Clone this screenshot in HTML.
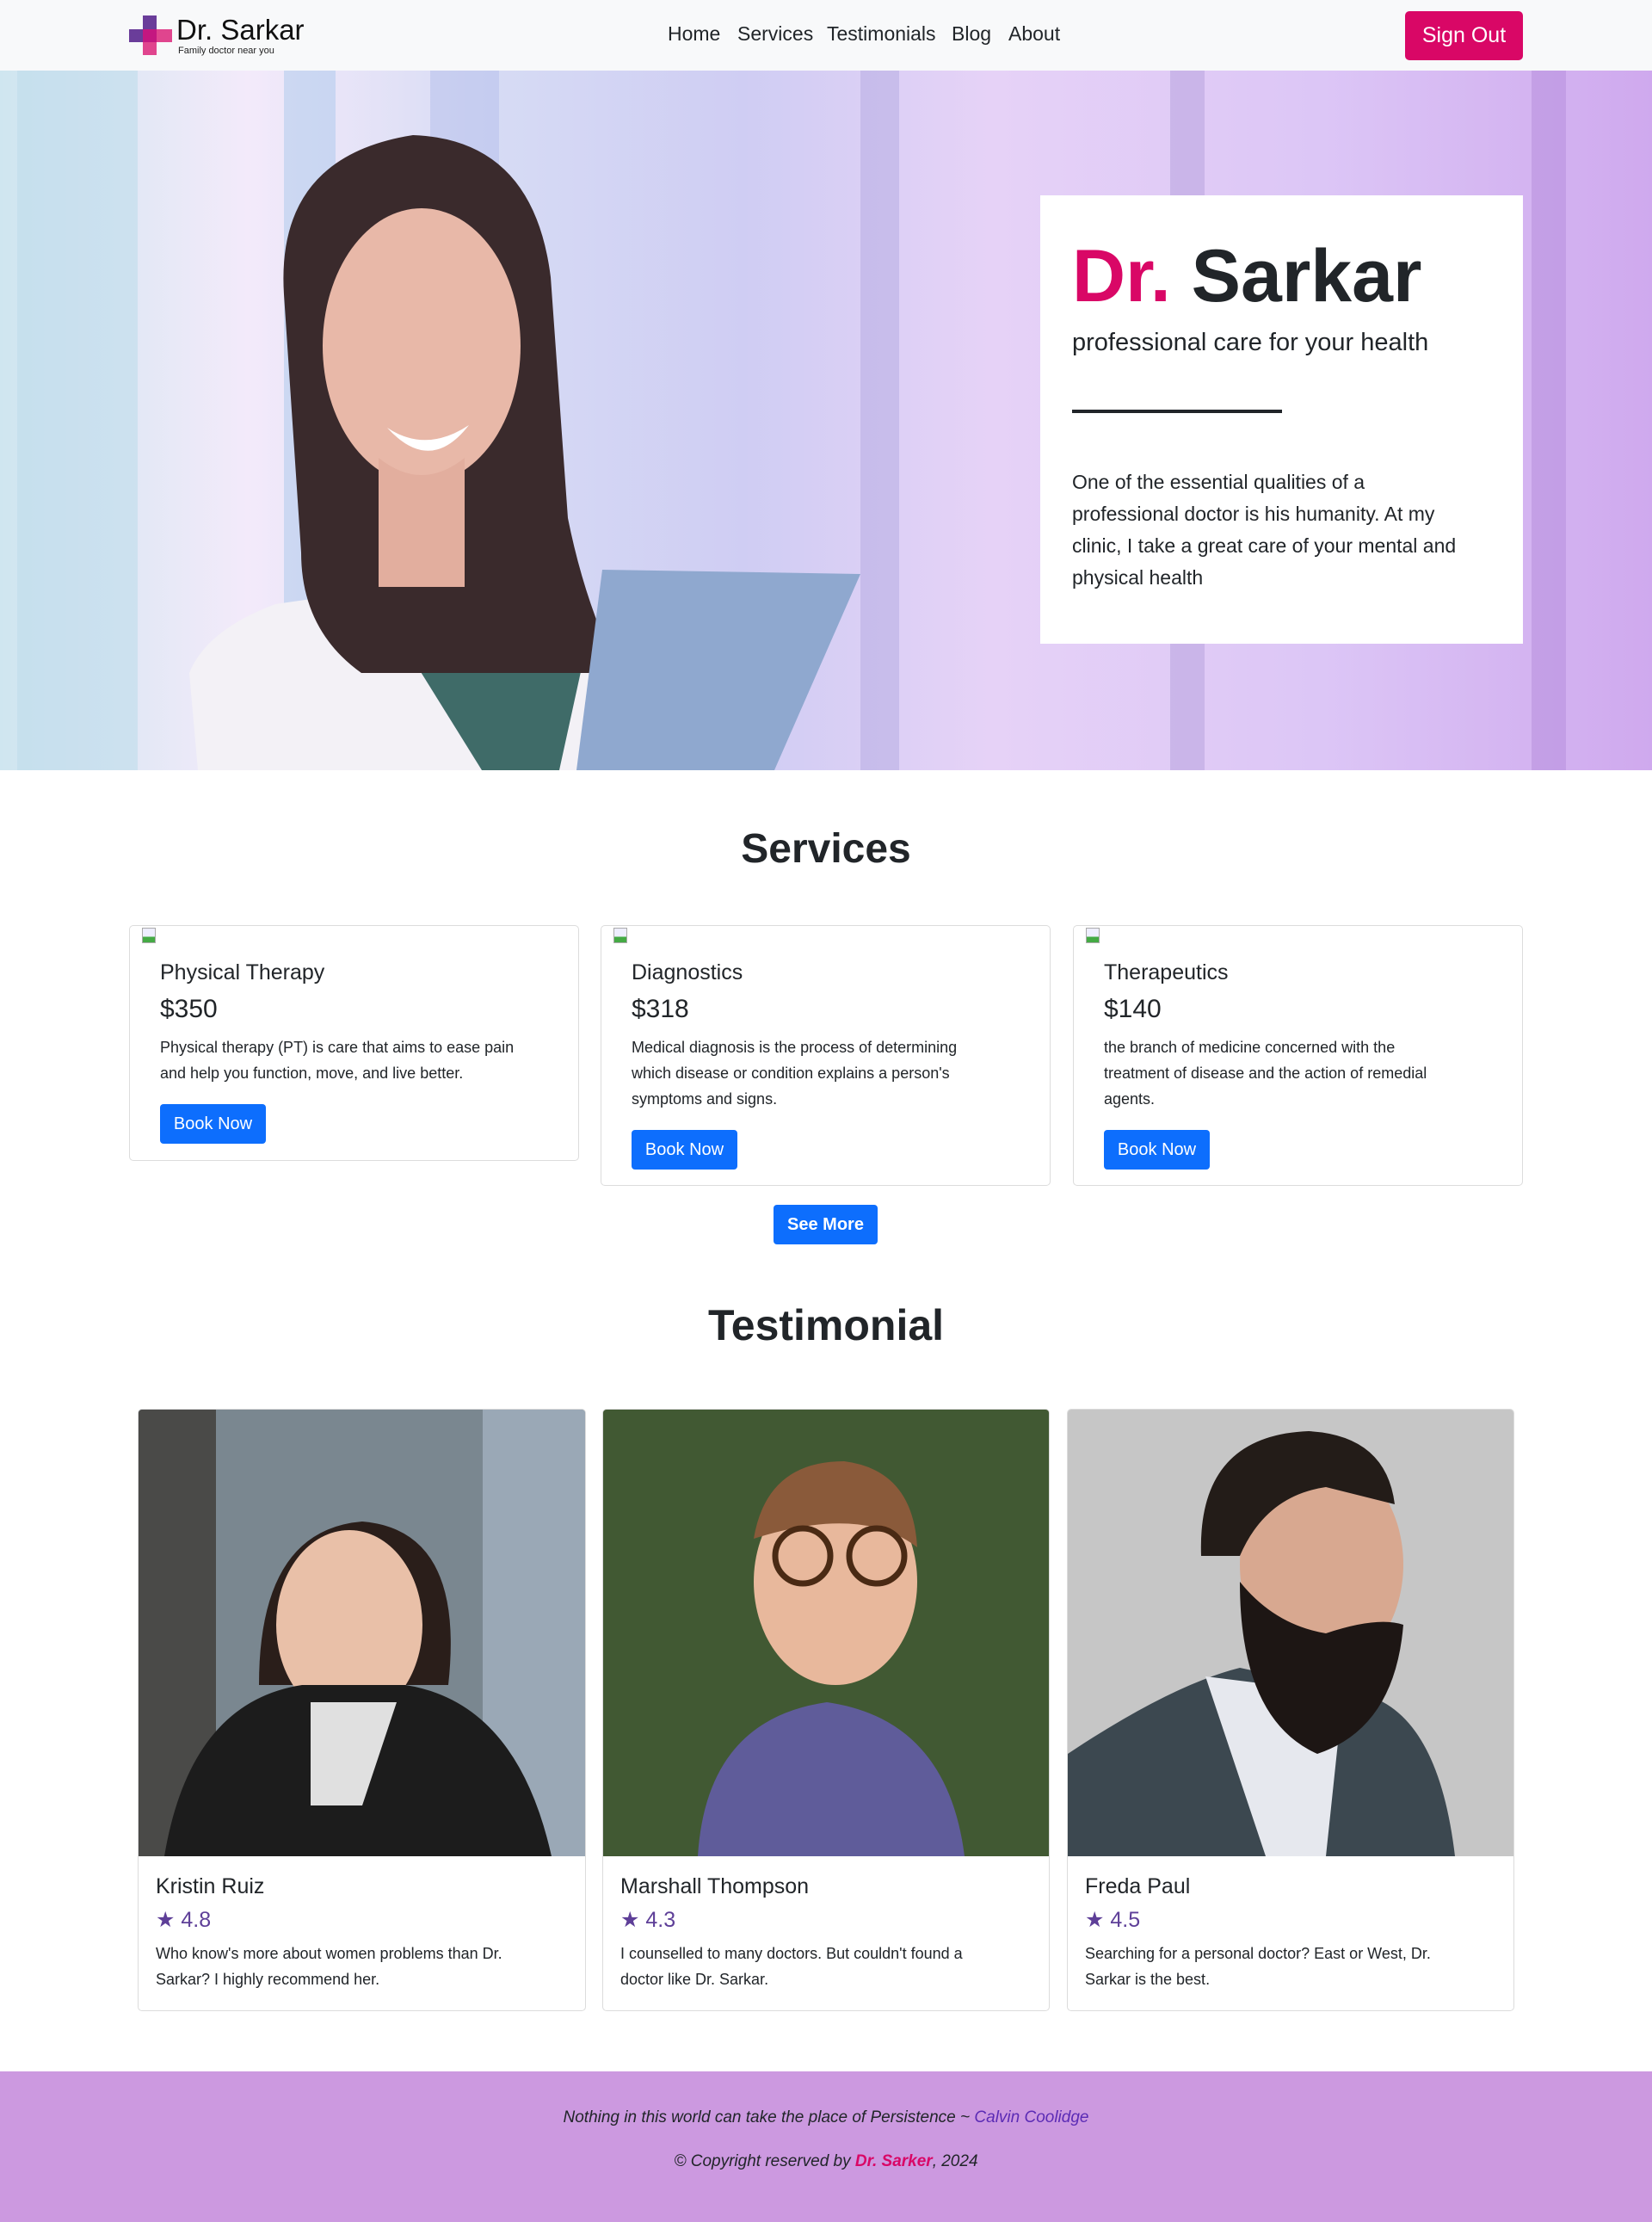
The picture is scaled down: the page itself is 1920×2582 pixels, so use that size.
<!DOCTYPE html>
<html><head><meta charset="utf-8"><style>
*{box-sizing:border-box;margin:0;padding:0}
body{width:1920px;height:2582px;position:relative;background:#fff;font-family:"Liberation Sans",sans-serif;color:#212529;overflow:hidden}
.a{position:absolute}
nav{position:absolute;left:0;top:0;width:1920px;height:82px;background:#f8f9fa}
.nl{position:absolute;top:26px;font-size:23px;color:#212529}
.card{position:absolute;border:1px solid #dcdcdc;border-radius:5px;background:#fff}
.ct{position:absolute;left:35px;font-size:25px}
.cp{position:absolute;left:35px;font-size:30px}
.cd{position:absolute;left:35px;font-size:18px;line-height:30px;white-space:nowrap}
.btn{position:absolute;left:35px;background:#0d6efd;color:#fff;font-size:20px;border-radius:4px;text-align:center;line-height:46px;height:46px;width:123px}
.bi{position:absolute;left:14px;top:2px;width:16px;height:18px;border:1px solid #aaa;background:linear-gradient(#eef 60%,#4a4 60%)}
.tn{position:absolute;left:20px;font-size:25px}
.tr{position:absolute;left:20px;font-size:25px;color:#5e3f98}
.tt{position:absolute;left:20px;font-size:18px;line-height:30px;white-space:nowrap}
</style></head><body>
<nav>
 <div class="a" style="left:166px;top:18px;width:16px;height:46px;background:#6a3d9a"></div>
 <div class="a" style="left:150px;top:34px;width:50px;height:15px;background:#6a3d9a"></div>
 <div class="a" style="left:166px;top:34px;width:34px;height:15px;background:#e0458e"></div>
 <div class="a" style="left:166px;top:34px;width:16px;height:30px;background:#e0458e"></div>
 <div class="a" style="left:166px;top:34px;width:16px;height:15px;background:#c41780"></div>
 <div class="a" style="left:205px;top:16px;font-size:33px;color:#111">Dr. Sarkar</div>
 <div class="a" style="left:207px;top:53px;font-size:11px;color:#222">Family doctor near you</div>
 <div class="nl" style="left:776px">Home</div>
 <div class="nl" style="left:857px">Services</div>
 <div class="nl" style="left:961px">Testimonials</div>
 <div class="nl" style="left:1106px">Blog</div>
 <div class="nl" style="left:1172px">About</div>
 <div class="a" style="left:1633px;top:13px;width:137px;height:57px;background:#d90766;border-radius:5px;color:#fff;font-size:25px;text-align:center;line-height:57px">Sign Out</div>
</nav>
<div class="a" style="left:0;top:82px;width:1920px;height:813px;overflow:hidden;background:linear-gradient(90deg,#cfe6f0 0%,#f3eafa 15%,#d6dbf4 30%,#cfcdf3 45%,#e6d2f7 60%,#dcc6f6 80%,#cfa9ee 100%)">
 <div class="a" style="left:20px;top:0;width:140px;height:813px;background:rgba(190,220,235,.6)"></div>
 <div class="a" style="left:330px;top:0;width:60px;height:813px;background:rgba(170,200,235,.5)"></div>
 <div class="a" style="left:500px;top:0;width:80px;height:813px;background:rgba(180,190,235,.5)"></div>
 <div class="a" style="left:1000px;top:0;width:45px;height:813px;background:rgba(170,160,220,.4)"></div>
 <div class="a" style="left:1360px;top:0;width:40px;height:813px;background:rgba(180,160,220,.5)"></div>
 <div class="a" style="left:1780px;top:0;width:40px;height:813px;background:rgba(180,140,220,.5)"></div>
 <svg class="a" style="left:0;top:0" width="1100" height="813">
  <path d="M230 813 L220 700 Q240 650 320 620 L460 600 L640 640 Q720 690 740 813Z" fill="#f3f1f6"/>
  <path d="M440 620 L560 813 L650 813 L690 630 Z" fill="#3f6b68"/>
  <path d="M330 260 Q320 100 480 75 Q620 80 640 240 L660 520 Q680 620 720 700 L600 700 L420 700 Q350 650 350 560 Z" fill="#3a2a2c"/>
  <ellipse cx="490" cy="320" rx="115" ry="160" fill="#e8b8a8"/>
  <path d="M440 450 Q490 490 540 450 L540 600 L440 600Z" fill="#e2ae9e"/>
  <path d="M450 415 Q495 445 545 412 Q500 470 450 415Z" fill="#fff"/>
  <path d="M700 580 L1000 585 L900 813 L670 813 Z" fill="#8fa8cf"/>
 </svg>
</div>
<div class="a" style="left:1209px;top:227px;width:561px;height:521px;background:#fff">
 <div class="a" style="left:37px;top:45px;font-size:86px;font-weight:bold;color:#212529;white-space:nowrap"><span style="color:#d90766">Dr.</span> Sarkar</div>
 <div class="a" style="left:37px;top:155px;font-size:29px">professional care for your health</div>
 <div class="a" style="left:37px;top:249px;width:244px;height:4px;background:#212529"></div>
 <div class="a" style="left:37px;top:315px;font-size:23px;line-height:37px;white-space:nowrap">One of the essential qualities of a<br>professional doctor is his humanity. At my<br>clinic, I take a great care of your mental and<br>physical health</div>
</div>
<div class="a" style="left:0;top:959px;width:1920px;text-align:center;font-size:48px;font-weight:bold">Services</div>
<div class="card" style="left:150px;top:1075px;width:523px;height:274px"><div class="bi"></div>
 <div class="ct" style="top:40px">Physical Therapy</div><div class="cp" style="top:80px">$350</div>
 <div class="cd" style="top:126px">Physical therapy (PT) is care that aims to ease pain<br>and help you function, move, and live better.</div>
 <div class="btn" style="top:207px">Book Now</div></div>
<div class="card" style="left:698px;top:1075px;width:523px;height:303px"><div class="bi"></div>
 <div class="ct" style="top:40px">Diagnostics</div><div class="cp" style="top:80px">$318</div>
 <div class="cd" style="top:126px">Medical diagnosis is the process of determining<br>which disease or condition explains a person's<br>symptoms and signs.</div>
 <div class="btn" style="top:237px">Book Now</div></div>
<div class="card" style="left:1247px;top:1075px;width:523px;height:303px"><div class="bi"></div>
 <div class="ct" style="top:40px">Therapeutics</div><div class="cp" style="top:80px">$140</div>
 <div class="cd" style="top:126px">the branch of medicine concerned with the<br>treatment of disease and the action of remedial<br>agents.</div>
 <div class="btn" style="top:237px">Book Now</div></div>
<div class="a" style="left:899px;top:1400px;width:121px;height:46px;background:#0d6efd;color:#fff;font-weight:bold;font-size:20px;border-radius:4px;text-align:center;line-height:46px">See More</div>
<div class="a" style="left:0;top:1511px;width:1920px;text-align:center;font-size:50px;font-weight:bold">Testimonial</div>

<div class="card" style="left:160px;top:1637px;width:521px;height:700px;overflow:hidden">
 <svg class="a" style="left:0;top:0" width="521" height="519">
  <rect width="521" height="519" fill="#7a8790"/><rect width="90" height="519" fill="#4a4a48"/><rect x="400" width="121" height="519" fill="#9aa8b6"/>
  <path d="M140 320 Q140 140 260 130 Q380 140 360 320 Z" fill="#2a1e1a"/>
  <ellipse cx="245" cy="250" rx="85" ry="110" fill="#e9c0a8"/>
  <path d="M30 519 Q60 340 190 320 L310 320 Q440 340 480 519Z" fill="#1c1c1c"/>
  <path d="M200 340 L300 340 L260 460 L200 460Z" fill="#e0e0e0"/>
 </svg>
 <div class="tn" style="top:540px">Kristin Ruiz</div><div class="tr" style="top:578px">★ 4.8</div>
 <div class="tt" style="top:617px">Who know's more about women problems than Dr.<br>Sarkar? I highly recommend her.</div></div>
<div class="card" style="left:700px;top:1637px;width:520px;height:700px;overflow:hidden">
 <svg class="a" style="left:0;top:0" width="520" height="519">
  <rect width="520" height="519" fill="#34492c"/><rect x="0" y="0" width="520" height="519" fill="#4d6a3a" opacity=".5"/>
  <path d="M110 519 Q120 360 260 340 Q400 360 420 519Z" fill="#5f5c9a"/>
  <ellipse cx="270" cy="200" rx="95" ry="120" fill="#e8b89c"/>
  <path d="M175 150 Q190 60 280 60 Q360 70 365 160 Q300 110 175 150Z" fill="#8a5a3a"/>
  <circle cx="232" cy="170" r="32" fill="none" stroke="#4a2a14" stroke-width="7"/><circle cx="318" cy="170" r="32" fill="none" stroke="#4a2a14" stroke-width="7"/>
 </svg>
 <div class="tn" style="top:540px">Marshall Thompson</div><div class="tr" style="top:578px">★ 4.3</div>
 <div class="tt" style="top:617px">I counselled to many doctors. But couldn't found a<br>doctor like Dr. Sarkar.</div></div>
<div class="card" style="left:1240px;top:1637px;width:520px;height:700px;overflow:hidden">
 <svg class="a" style="left:0;top:0" width="520" height="519">
  <rect width="520" height="519" fill="#c6c6c6"/>
  <path d="M0 519 L0 400 Q120 320 200 300 L340 330 Q430 350 450 519Z" fill="#3c4850"/>
  <path d="M160 310 L320 330 L300 519 L230 519Z" fill="#e6e8ee"/>
  <ellipse cx="295" cy="180" rx="95" ry="125" fill="#d8a890"/>
  <path d="M155 170 Q150 30 280 25 Q370 30 380 110 L300 90 Q230 100 200 170Z" fill="#231c18"/>
  <path d="M200 200 Q200 360 290 400 Q380 370 390 250 Q360 240 300 260 Q240 250 200 200Z" fill="#1d1614"/>
 </svg>
 <div class="tn" style="top:540px">Freda Paul</div><div class="tr" style="top:578px">★ 4.5</div>
 <div class="tt" style="top:617px">Searching for a personal doctor? East or West, Dr.<br>Sarkar is the best.</div></div>

<div class="a" style="left:0;top:2407px;width:1920px;height:175px;background:#cc99e0">
 <div class="a" style="left:0;top:43px;width:1920px;text-align:center;font-size:19px;font-style:italic">Nothing in this world can take the place of Persistence ~ <span style="color:#5b2bb5">Calvin Coolidge</span></div>
 <div class="a" style="left:0;top:94px;width:1920px;text-align:center;font-size:19px;font-style:italic">© Copyright reserved by <b style="color:#d90766">Dr. Sarker</b>, 2024</div>
</div>
</body></html>
